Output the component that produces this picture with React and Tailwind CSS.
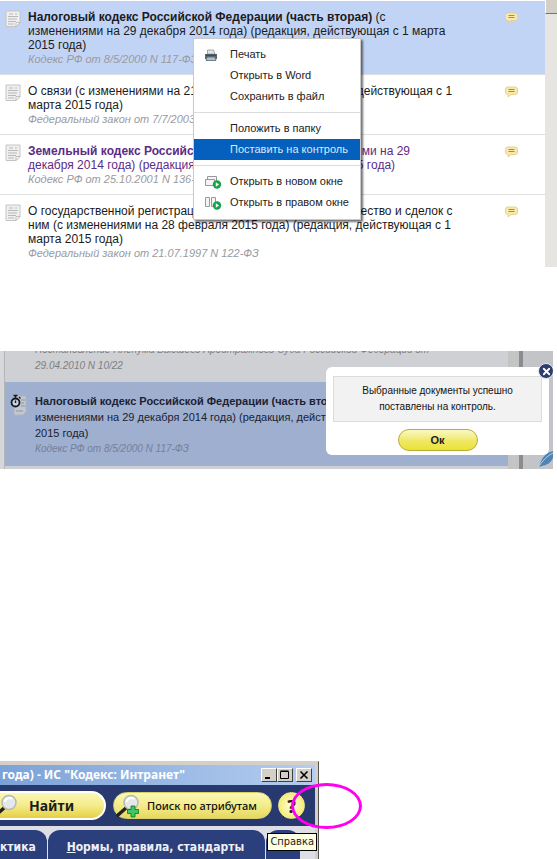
import { X } from 'lucide-react';

const documents = [
  {
    id: 1,
    title: 'Налоговый кодекс Российской Федерации (часть вторая)',
    lines: [' (с', 'изменениями на 29 декабря 2014 года) (редакция, действующая с 1 марта', '2015 года)'],
    meta: 'Кодекс РФ от 8/5/2000 N 117-ФЗ',
    selected: true,
  },
  {
    id: 2,
    lines: ['О связи (с изменениями на 21 июля 2014 года) (редакция, действующая с 1', 'марта 2015 года)'],
    meta: 'Федеральный закон от 7/7/2003 N 126-ФЗ',
  },
  {
    id: 3,
    title: 'Земельный кодекс Российской Федерации',
    lines: [' (с изменениями на 29', 'декабря 2014 года) (редакция, действующая с 1 марта 2015 года)'],
    meta: 'Кодекс РФ от 25.10.2001 N 136-ФЗ',
    visited: true,
  },
  {
    id: 4,
    lines: [
      'О государственной регистрации прав на недвижимое имущество и сделок с',
      'ним (с изменениями на 28 февраля 2015 года) (редакция, действующая с 1',
      'марта 2015 года)',
    ],
    meta: 'Федеральный закон от 21.07.1997 N 122-ФЗ',
  },
];

const menuGroups = [
  [{ label: 'Печать', icon: 'print' }, { label: 'Открыть в Word' }, { label: 'Сохранить в файл' }],
  [{ label: 'Положить в папку' }, { label: 'Поставить на контроль', active: true }],
  [{ label: 'Открыть в новом окне', icon: 'window' }, { label: 'Открыть в правом окне', icon: 'split' }],
];

const DocIcon = () => (
  <svg width="16" height="18" viewBox="0 0 16 18" className="shrink-0">
    <path d="M1 1h14v11.500l-4 4H1z" fill="#f0f0f0" stroke="#c4c4c4" />
    <path d="M15 12.500h-4v4z" fill="#fff" stroke="#b4b4b4" strokeWidth=".8" />
    <path d="M4 4h4M10 4h2M3 6.500h10M3 9h9M3 11.500h8M3 14h6" stroke="#b8b8b8" />
  </svg>
);

const CommentIcon = () => (
  <svg width="13" height="12" viewBox="0 0 13 12" className="block">
    <path
      d="M3 1h7a2.500 2.500 0 0 1 2.500 2.500V6A2.500 2.500 0 0 1 10 8.500H6L3 11l.5-2.500A2.500 2.500 0 0 1 .5 6V3.500A2.500 2.500 0 0 1 3 1z"
      fill="#fbe9ac"
      stroke="#ead08c"
    />
    <path d="M3.500 3.500h6M3.500 5.500h6" stroke="#b08a38" />
  </svg>
);

const PlayBadge = () => (
  <>
    <circle cx="13" cy="10.500" r="4.200" fill="#17a34a" />
    <path d="M11.800 8.300v4.400l3.200-2.200z" fill="#fff" />
  </>
);

const MenuIcon = ({ name }) => (
  <svg width="18" height="16" viewBox="0 0 18 16">
    {name === 'print' && (
      <>
        <path d="M3.500 7V3h6L11 7z" fill="#dfe5ea" stroke="#8a929a" strokeWidth=".8" />
        <path d="M1 7h12v5H1z" fill="#5d666f" />
        <path d="M3 10h8l1 3.500H2z" fill="#a4c0d6" stroke="#5f666d" strokeWidth=".8" />
        <path d="M2 8.300h10" stroke="#3a4046" />
      </>
    )}
    {name === 'window' && (
      <>
        <path d="M3.500 5.500v-3h9V8M1.500 5.500h9v6h-9z" fill="#f4f4f4" stroke="#999" />
        <PlayBadge />
      </>
    )}
    {name === 'split' && (
      <>
        <path d="M1.500 2.500h4v9h-4zM7.500 2.500h4v9h-4z" fill="#f4f4f4" stroke="#999" />
        <PlayBadge />
      </>
    )}
  </svg>
);

const ContextMenu = () => (
  <div
    role="menu"
    className="absolute left-[193px] top-[38px] w-[168px] border border-[#c9c9c9] bg-white pt-[5px] pb-[6px] shadow-[2px_2px_2px_rgba(0,0,0,0.55)]"
  >
    {menuGroups.map((group, i) => (
      <div key={i}>
        {i > 0 && <div className="my-[5px] h-px bg-[#dcdcdc]" />}
        {group.map((item) => (
          <button
            key={item.label}
            role="menuitem"
            className={`flex h-[21px] w-full items-center whitespace-nowrap text-left text-[11px] ${
              item.active ? 'bg-[#0560bd] text-[#dbe9fa]' : 'text-[#222]'
            }`}
          >
            <span className="w-[36px] shrink-0 pl-[10px]">{item.icon && <MenuIcon name={item.icon} />}</span>
            {item.label}
          </button>
        ))}
      </div>
    ))}
  </div>
);

const DocumentRow = ({ doc }) => (
  <li
    className={`flex items-start border-b border-[#dfdfdf] pt-[9px] pb-[7px] pl-[5px] last:border-b-0 last:pb-[6px] ${
      doc.selected ? 'bg-[#c2d4f5]' : 'bg-white'
    }`}
  >
    <DocIcon />
    <div className="ml-[7px] min-w-0 flex-1 whitespace-nowrap">
      <a href="#" className={`block text-[12px] leading-[14px] ${doc.visited ? 'text-[#5c2b86]' : 'text-[#1b1b22]'}`}>
        {doc.title && <b>{doc.title}</b>}
        {doc.lines.map((line, i) => (
          <span key={i}>
            {i > 0 && <br />}
            {line}
          </span>
        ))}
      </a>
      <p className="text-[11px] leading-[15px] text-[#9a9a9e] italic">{doc.meta}</p>
    </div>
    <button aria-label="Комментарий" className="mt-[2px] mr-[27px]">
      <CommentIcon />
    </button>
  </li>
);

const DocumentList = () => (
  <section className="relative flex">
    <ul className="min-w-0 flex-1 pt-px">
      {documents.map((doc) => (
        <DocumentRow key={doc.id} doc={doc} />
      ))}
    </ul>
    <div className="w-[12px] bg-[#e6e5e2]">
      <div className="h-[14px] border-b border-l border-[#77756f] border-l-white bg-[#d4d0c8]" />
    </div>
    <ContextMenu />
  </section>
);

const ConfirmDialog = () => (
  <div
    role="dialog"
    aria-label="Сообщение"
    className="absolute top-[16px] right-[4px] w-[223px] rounded-[6px] bg-white px-[7px] pt-[9px] pb-[4px] text-center"
  >
    <p className="border border-[#dcdcdc] bg-[#f2f2f2] py-[6px] text-[10px] leading-[16px] text-[#111]">
      Выбранные документы успешно
      <br />
      поставлены на контроль.
    </p>
    <button className="mt-[7px] h-[22px] w-[80px] rounded-full border border-[#b9ad3a] bg-linear-to-b from-[#fbf9c4] via-[#f0e96a] to-[#ebe22c] text-[11px] leading-none font-bold text-[#222]">
      Ок
    </button>
    <button
      aria-label="Закрыть"
      className="absolute -top-[4px] -right-[5px] flex size-[16px] items-center justify-center rounded-full border border-[#e6ebf5] bg-[#2b3d6b] text-white"
    >
      <X size={11} strokeWidth={4} />
    </button>
  </div>
);

const ControlPanel = () => (
  <section className="relative mt-[84px] mr-[4px] flex overflow-hidden bg-[#cfd0d3]">
    <div className="w-[5px] border-r border-[#b4b6ba] bg-[#d6d7d9]" />
    <div className="min-w-0 flex-1">
      <div className="flex h-[31px] flex-col justify-end overflow-hidden pb-[8px] pl-[30px] text-[10px] leading-[16px] whitespace-nowrap text-[#7d7f84] italic">
        <p>
          Постановление Пленума Высшего Арбитражного Суда Российской Федерации от
          <br />
          29.04.2010 N 10/22
        </p>
      </div>
      <div className="flex items-start bg-[#9eafd0] pt-[11px] pb-[9px] pl-[5px]">
        <svg width="18" height="24" viewBox="0 0 18 24" className="shrink-0">
          <path d="M4 3h12v16l-3 3H4z" fill="#c3c8d0" stroke="#adb3bd" />
          <path d="M11 7h4M11 10h3M11 13h4M6 18h7" stroke="#8d939d" />
          <circle cx="5.500" cy="9.500" r="4" fill="#c9d2e2" stroke="#15181e" strokeWidth="1.800" />
          <path d="M3.500 2.500h4M5.500 3v2M5.500 7.500V10M9 4l1.500 1.500" stroke="#15181e" strokeWidth="1.400" fill="none" />
        </svg>
        <div className="ml-[7px] whitespace-nowrap">
          <a href="#" className="block text-[11px] leading-[16px] text-[#1b2230]">
            <b>Налоговый кодекс Российской Федерации (часть вторая)</b> (с
            <br />
            изменениями на 29 декабря 2014 года) (редакция, действующая с 1 марта
            <br />
            2015 года)
          </a>
          <p className="text-[10px] leading-[16px] text-[#75819b] italic">Кодекс РФ от 8/5/2000 N 117-ФЗ</p>
        </div>
      </div>
      <div className="h-[3px]" />
    </div>
    <div className="w-[11px] bg-[#c4c4c4]" />
    <div className="w-[4px] bg-[#8b8c90]" />
    <div className="flex w-[30px] items-end justify-end bg-[#c3c4c8]">
      <svg width="16" height="20" viewBox="0 0 16 20">
        <path d="M2 18C4 10 8 4 16 2v7c-3 6-7 7-11 8z" fill="#4f84b4" />
        <path d="M1 19C5 12 10 7 16 4" stroke="#b9d2e6" fill="none" />
      </svg>
    </div>
    <ConfirmDialog />
  </section>
);

const Magnifier = ({ plus }) => (
  <svg width="26" height="24" viewBox="0 0 26 24" className="shrink-0">
    <path d="M2 21l8-7" stroke="#222" strokeWidth="3.500" strokeLinecap="round" />
    <circle cx="15" cy="8.500" r="7" fill="#e6e8e8" stroke="#b7b9b6" strokeWidth="1.500" />
    <path d="M10.500 8a5 5 0 0 1 8-3" stroke="#fff" strokeWidth="2" fill="none" />
    {plus && <path d="M15 12h4v3.500h3.500v4H19V23h-4v-3.500h-3.500v-4H15z" fill="#3cc862" stroke="#0e6b2c" strokeWidth=".8" />}
  </svg>
);

const TitleButton = ({ label, children }) => (
  <button
    aria-label={label}
    className="flex h-[14px] w-[16px] items-center justify-center border border-t-white border-r-[#404040] border-b-[#404040] border-l-white bg-[#d4d0c8]"
  >
    <svg width="10" height="10" viewBox="0 0 10 10" fill="none" stroke="#000">
      {children}
    </svg>
  </button>
);

const AppWindow = () => (
  <section className="relative mt-[292px] w-[319px] border-t border-r border-[#d4d0c8] border-r-[#55534e] bg-[#d4d0c8] pt-[3px] pr-[3px] font-['Noto_Sans','Open_Sans',sans-serif]">
    <div className="flex h-[20px] items-center bg-linear-to-r from-[#7ba2d8] to-[#b4cdf0] pl-[2px]">
      <h1 className="flex-1 text-[12px] leading-[16px] font-bold whitespace-nowrap text-white">года) - ИС "Кодекс: Интранет"</h1>
      <div className="flex pr-[3px]">
        <TitleButton label="Свернуть">
          <path d="M1 8h5" strokeWidth="2" />
        </TitleButton>
        <TitleButton label="Развернуть">
          <path d="M.5 1.500h8v7h-8zM.5 1h8" />
        </TitleButton>
        <span className="w-[3px]" />
        <TitleButton label="Закрыть">
          <path d="M1.500 1.500l7 7M8.500 1.500l-7 7" strokeWidth="1.600" />
        </TitleButton>
      </div>
    </div>

    <div className="flex h-[41px] items-center bg-[#27396f]">
      <button className="flex h-[29px] w-[106px] items-center rounded-r-full border-2 border-l-0 border-white bg-linear-to-b from-[#fbf8b4] via-[#f3ec8a] to-[#e6cf3e] text-[14px] leading-none font-bold text-[#1c1c1c]">
        <span className="-ml-[6px] w-[35px] shrink-0">
          <Magnifier />
        </span>
        Найти
      </button>
      <button className="ml-[7px] flex h-[27px] w-[159px] items-center rounded-full border border-[#d9cf6a] bg-linear-to-b from-[#fbf8b4] via-[#f3ec8a] to-[#e6d75e] pl-[2px] text-[11px] leading-none font-medium whitespace-nowrap text-[#111]">
        <span className="w-[31px] shrink-0">
          <Magnifier plus />
        </span>
        Поиск по атрибутам
      </button>
      <button className="ml-[6px] size-[27px] rounded-full border border-[#f4ee9a] bg-radial from-[#fffde0] to-[#f2e416] text-[18px] leading-none font-bold text-[#222]">
        ?
      </button>
    </div>

    <nav className="flex gap-px overflow-hidden bg-[#dedfe6] pt-[4px] font-['DejaVu_Sans_Condensed','DejaVu_Sans',sans-serif] text-[12px] font-bold whitespace-nowrap text-[#eef0f8]">
      <a href="#" className="flex h-[29px] w-[47px] items-center rounded-tr-[12px] bg-[#2a3f7b] pt-[4px]">
        ктика
      </a>
      <a href="#" className="flex h-[29px] w-[217px] items-center justify-center rounded-t-[12px] bg-[#2a3f7b] pt-[4px] pr-[2px]">
        <span>
          <u>Н</u>ормы, правила, стандарты
        </span>
      </a>
      <a href="#" aria-label="Справка" className="h-[29px] w-[34px] rounded-t-[12px] bg-[#2a3f7b]" />
    </nav>

    <div
      role="tooltip"
      className="absolute right-px bottom-[8px] border border-black bg-[#ffffe1] px-[2px] font-['DejaVu_Sans_Condensed','DejaVu_Sans',sans-serif] text-[11px] leading-[16px] text-[#222]"
    >
      Справка
    </div>
    <div className="absolute top-[21px] left-[291px] h-[46px] w-[71px] rounded-[50%] border-[3px] border-[#ff00f0]" />
  </section>
);

const App = () => (
  <div className="overflow-hidden bg-white font-['Liberation_Sans',Arial,sans-serif]">
    <DocumentList />
    <ControlPanel />
    <AppWindow />
  </div>
);

export default App;
